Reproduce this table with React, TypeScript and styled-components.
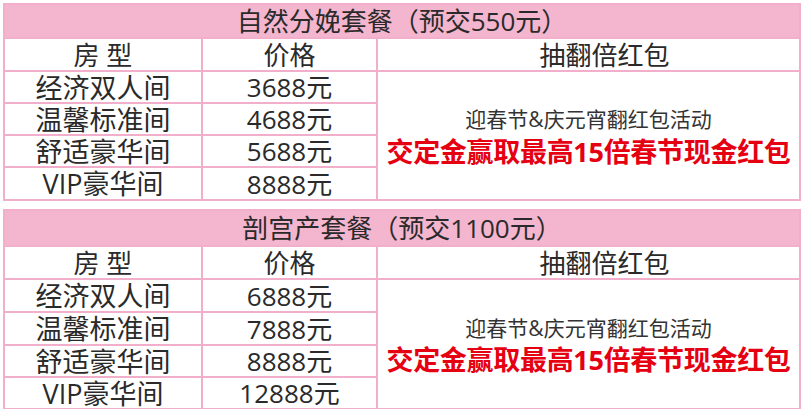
import type { FC } from 'react'
import styled, { createGlobalStyle } from 'styled-components'

// ─── 全局样式 ────────────────────────────────────────────────────────────────

const GlobalStyle = createGlobalStyle`
  html, body {
    margin: 0;
    padding: 0;
    background: #ffffff;
  }
  body {
    font-family: "Open Sans", "Noto Sans CJK SC", sans-serif;
    color: #2a2a2a;
  }
`

const PINK_LINE = '#f2afcb'
const PINK_FILL = '#f4b5ce'

// ─── Styled Components ───────────────────────────────────────────────────────

const Page = styled.div`
  display: flex;
  flex-direction: column;
  gap: 8px;
  padding: 3px 2px 0 3px;
  width: 798px;
`

// the pink background shows through the 2px gaps as the ruling lines
const Table = styled.div<{ $rows: number[] }>`
  display: grid;
  grid-template-columns: 196px 173px 421px;
  grid-template-rows: ${({ $rows }) => $rows.map((h) => `${h}px`).join(' ')};
  gap: 2px;
  padding: 2px;
  background: ${PINK_LINE};
`

const Cell = styled.div`
  display: flex;
  align-items: center;
  justify-content: center;
  background: #ffffff;
  font-size: 26px;
  line-height: 1;
  white-space: nowrap;
  color: #2a2a2a;
`

const TitleCell = styled(Cell)`
  grid-column: 1 / -1;
  background: ${PINK_FILL};
  font-size: 26px;
`

const HeadCell = styled(Cell)<{ $shift?: number }>`
  padding-left: ${({ $shift }) => $shift ?? 0}px;
`

const RoomCell = styled(Cell)`
  font-size: 27px;
`

const PromoCell = styled.div<{ $span: number }>`
  grid-column: 3;
  grid-row: 3 / span ${({ $span }) => $span};
  display: flex;
  flex-direction: column;
  align-items: center;
  justify-content: center;
  padding-top: 2px;
  background: #ffffff;
`

const PromoLine = styled.div`
  font-size: 21px;
  line-height: 1.45;
  color: #333333;
`

const PromoStrong = styled.div`
  font-size: 27px;
  font-weight: 700;
  line-height: 1.25;
  color: #e50012;
  letter-spacing: -0.3px;
`

// ─── Data ────────────────────────────────────────────────────────────────────

interface Package {
  title: string
  rowHeights: number[]
  rows: { room: string; price: string }[]
}

const PACKAGES: Package[] = [
  {
    title: '自然分娩套餐（预交550元）',
    rowHeights: [32, 31, 30, 30, 30, 31],
    rows: [
      { room: '经济双人间', price: '3688元' },
      { room: '温馨标准间', price: '4688元' },
      { room: '舒适豪华间', price: '5688元' },
      { room: 'VIP豪华间', price: '8888元' },
    ],
  },
  {
    title: '剖宫产套餐（预交1100元）',
    rowHeights: [34, 31, 31, 31, 30, 30],
    rows: [
      { room: '经济双人间', price: '6888元' },
      { room: '温馨标准间', price: '7888元' },
      { room: '舒适豪华间', price: '8888元' },
      { room: 'VIP豪华间', price: '12888元' },
    ],
  },
]

// ─── Component ───────────────────────────────────────────────────────────────

// promo cell is placed explicitly, room/price cells auto-fill columns 1–2
const PackageTable: FC<{ pkg: Package }> = ({ pkg }) => (
  <Table $rows={pkg.rowHeights}>
    <TitleCell>{pkg.title}</TitleCell>
    <HeadCell>房 型</HeadCell>
    <HeadCell>价格</HeadCell>
    <HeadCell $shift={32}>抽翻倍红包</HeadCell>
    <PromoCell $span={pkg.rows.length}>
      <PromoLine>迎春节&amp;庆元宵翻红包活动</PromoLine>
      <PromoStrong>交定金赢取最高15倍春节现金红包</PromoStrong>
    </PromoCell>
    {pkg.rows.flatMap((row) => [
      <RoomCell key={`${row.room}-room`}>{row.room}</RoomCell>,
      <Cell key={`${row.room}-price`}>{row.price}</Cell>,
    ])}
  </Table>
)

export default function App() {
  return (
    <>
      <GlobalStyle />
      <Page>
        {PACKAGES.map((pkg) => (
          <PackageTable key={pkg.title} pkg={pkg} />
        ))}
      </Page>
    </>
  )
}
